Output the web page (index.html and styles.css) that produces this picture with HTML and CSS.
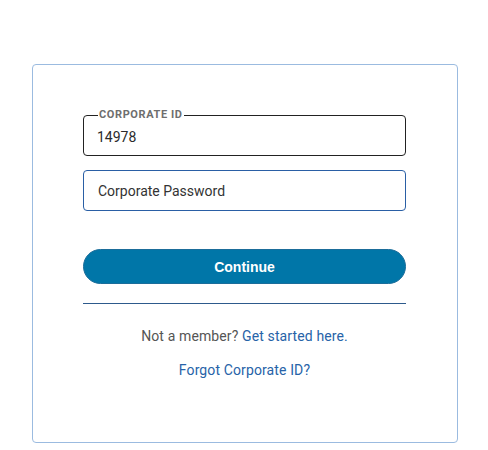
FILE: index.html
```
<!DOCTYPE html>
<html>
<head>
<meta charset="utf-8">
<link rel="stylesheet" href="styles.css">
</head>
<body>
<div class="card">
  <div class="field field-active">
    <span class="field-label">CORPORATE ID</span>
    <span class="field-value">14978</span>
  </div>
  <div class="field field-empty">
    <span class="field-placeholder">Corporate Password</span>
  </div>
  <button class="btn">Continue</button>
  <div class="divider"></div>
  <p class="line member">Not a member? <a class="link">Get started here.</a></p>
  <p class="line forgot"><a class="link">Forgot Corporate ID?</a></p>
</div>
</body>
</html>
```
FILE: styles.css
```
html, body {
  margin: 0;
  padding: 0;
  background: #fff;
}
body {
  font-family: Roboto, "Liberation Sans", sans-serif;
  padding: 64px 0 0 32px;
}
.card {
  box-sizing: border-box;
  width: 426px;
  height: 379px;
  border: 1px solid #9bbbe0;
  border-radius: 4px;
  padding: 50px 51px 0 50px;
  display: flex;
  flex-direction: column;
}
.field {
  position: relative;
  box-sizing: border-box;
  height: 41px;
  border-radius: 4px;
  display: flex;
  align-items: center;
  padding-left: 13px;
  font-size: 14px;
  color: #333;
}
.field-active {
  border: 1px solid #222;
  padding-top: 2px;
}
.field-empty {
  border: 1px solid #2a5fa5;
  margin-top: 14px;
  padding-left: 14px;
}
.field-label {
  position: absolute;
  top: -7px;
  left: 14px;
  padding: 0 1px;
  background: #fff;
  font-size: 11px;
  line-height: 11px;
  font-weight: 700;
  letter-spacing: 0.6px;
  color: #6e6e6e;
}
.field-value {
  color: #2b2b2b;
}
.field-placeholder {
  color: #333;
}
.btn {
  margin-top: 38px;
  height: 35px;
  border: 1px solid #1b6d9a;
  border-radius: 18px;
  background: #0076a8;
  color: #fff;
  font-family: "Liberation Sans", Arial, sans-serif;
  font-weight: 700;
  font-size: 14px;
  padding: 0;
}
.divider {
  margin-top: 19px;
  height: 1px;
  background: #2d5a8c;
}
.line {
  margin: 0;
  text-align: center;
  font-size: 14px;
  line-height: 20px;
  letter-spacing: 0.12px;
  color: #555;
}
.member {
  margin-top: 22px;
}
.forgot {
  margin-top: 14px;
}
.link {
  color: #2763a8;
  text-decoration: none;
}
```
